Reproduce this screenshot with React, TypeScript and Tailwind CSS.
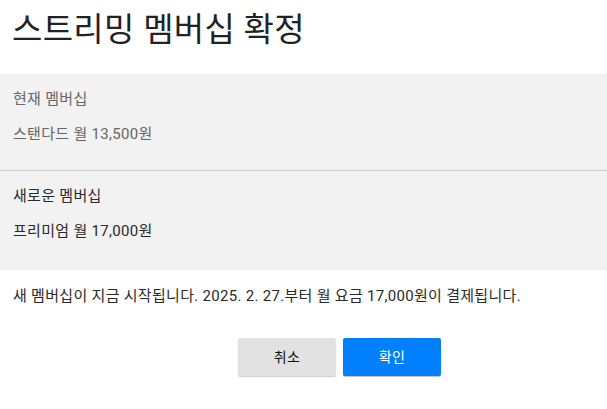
export default function App() {
  return (
    <div
      className="w-[607px] h-[409px] bg-white text-[#333] tracking-[0.3px]"
      style={{ fontFamily: 'Roboto, "Noto Sans CJK KR", sans-serif' }}
    >
      <h1 className="pt-[6px] pl-[12px] h-[74px] text-[33px] leading-[48px] text-[#222]">
        스트리밍 멤버십 확정
      </h1>

      <div className="bg-[#f2f2f2]">
        <div className="px-[13px] pt-[15px] h-[97px] border-b border-[#cfcfcf] text-[15px] text-[#666]">
          <p className="leading-[20px]">현재 멤버십</p>
          <p className="mt-[15px] leading-[20px]">스탠다드 월 13,500원</p>
        </div>
        <div className="px-[13px] pt-[15px] h-[99px] text-[15px] text-[#2a2a2a]">
          <p className="leading-[20px]">새로운 멤버십</p>
          <p className="mt-[15px] leading-[20px]">프리미엄 월 17,000원</p>
        </div>
      </div>

      <p className="pl-[13px] pt-[16px] text-[15px] leading-[20px] text-[#2a2a2a]">
        새 멤버십이 지금 시작됩니다. 2025. 2. 27.부터 월 요금 17,000원이 결제됩니다.
      </p>

      <div className="flex gap-[7px] pl-[238px] pt-[32px]">
        <button className="w-[98px] h-[38px] rounded-[2px] bg-[#e2e2e2] text-[14px] text-[#111] shadow-[0_1px_1px_rgba(0,0,0,0.2)]">
          취소
        </button>
        <button className="w-[98px] h-[38px] rounded-[2px] bg-[#0080ff] text-[14px] text-white shadow-[0_1px_1px_rgba(0,0,0,0.25)]">
          확인
        </button>
      </div>
    </div>
  );
}
